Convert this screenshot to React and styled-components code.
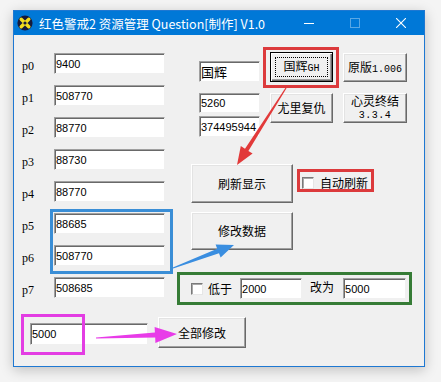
import React from 'react';
import styled, { createGlobalStyle, css } from 'styled-components';

const Global = createGlobalStyle`
  html, body { margin: 0; padding: 0; background: #f4f4f4; }
  body { width: 441px; height: 382px; overflow: hidden; }
  * { box-sizing: border-box; }
`;

const CJK = '"Noto Sans CJK SC", sans-serif';

const Page = styled.div`
  position: relative;
  width: 441px;
  height: 382px;
  padding: 10px 0 0 13px;
`;

const Window = styled.div`
  width: 412px;
  height: 357px;
  border: 1px solid #1e78d2;
  background: #f0f0f0;
  box-shadow: 0 3px 12px rgba(0, 0, 0, 0.22);
  display: flex;
  flex-direction: column;
`;

const TitleBar = styled.div`
  flex: none;
  height: 24px;
  background: #0078d7;
  display: flex;
  align-items: center;
  color: #fff;
  padding-left: 3px;
`;

const TitleText = styled.span`
  margin-left: 6px;
  font: 12.5px ${CJK};
  white-space: nowrap;
  flex: 1;
`;

const CaptionButton = styled.div`
  width: 46px;
  height: 24px;
  display: flex;
  align-items: center;
  justify-content: center;
`;

const Client = styled.div`
  flex: 1;
  padding: 17px 0 0 8px;
  display: flex;
  flex-direction: column;
`;

const MainRow = styled.div`
  display: flex;
  align-items: flex-start;
`;

const LeftCol = styled.div`
  margin-top: 1px;
  display: grid;
  grid-template-columns: 32px 111px;
  grid-auto-rows: 21px;
  row-gap: 11px;
`;

const PLabel = styled.span`
  font: 12px "Liberation Serif", serif;
  line-height: 21px;
  margin-top: 3px;
  color: #000;
`;

const Field = styled.input`
  width: ${(p) => p.$w || 111}px;
  height: ${(p) => p.$h || 21}px;
  margin: 0;
  padding: 0 1px;
  background: #fff;
  border: 1px solid;
  border-color: #a0a0a0 #f0f0f0 #f0f0f0 #a0a0a0;
  box-shadow: inset 1px 1px #696969;
  font: ${(p) => p.$fs || 11}px "Liberation Sans", ${CJK};
  color: #000;
  outline: none;
`;

const RightArea = styled.div`
  margin-left: 12px;
  width: 235px;
  display: flex;
  flex-direction: column;
`;

const TopGrid = styled.div`
  margin-left: 22px;
  display: grid;
  grid-template-columns: 61px 63px 64px;
  grid-template-rows: 30px 44px;
  column-gap: 10px;
  row-gap: 11px;
`;

const FieldStack = styled.div`
  display: flex;
  flex-direction: column;
  gap: 3px;
`;

const Button = styled.button`
  width: ${(p) => p.$w}px;
  height: ${(p) => p.$h}px;
  align-self: ${(p) => p.$align || 'start'};
  margin: 0;
  padding: 0;
  background: #f0f0f0;
  border: 1px solid;
  border-color: #fff #696969 #696969 #fff;
  box-shadow: inset -1px -1px #a0a0a0, inset 1px 1px #e3e3e3;
  font: 12px ${CJK};
  line-height: 12px;
  color: #000;
  position: relative;
  ${(p) =>
    p.$default &&
    css`
      border-color: #000;
      box-shadow: inset 1px 1px #fff, inset -1px -1px #696969, inset -2px -2px #a0a0a0;
      &::after {
        content: '';
        position: absolute;
        inset: 4px;
        border: 1px dotted #000;
      }
    `}
`;

const Mono = styled.span`
  font: 10px "Liberation Mono", monospace;
  letter-spacing: ${(p) => p.$ls || 0}px;
`;

const RefreshRow = styled.div`
  margin: 27px 0 0 14px;
  display: flex;
  align-items: flex-start;
`;

const CheckLabel = styled.label`
  display: flex;
  align-items: center;
  gap: ${(p) => p.$gap || 6}px;
  margin: ${(p) => p.$m || '0'};
  font: 12px ${CJK};
  color: #000;
  white-space: nowrap;
`;

const CheckBox = styled.span`
  width: 12px;
  height: 12px;
  background: #fff;
  border: 1px solid;
  border-color: #7a7a7a #e6e6e6 #e6e6e6 #7a7a7a;
  box-shadow: inset 1px 1px #a8a8a8;
  flex: none;
`;

const ModifyWrap = styled.div`
  margin: 9px 0 0 14px;
`;

const LowRow = styled.div`
  margin-top: 22px;
  height: 33px;
  padding-left: 14px;
  display: flex;
  align-items: center;
`;

const Caption = styled.span`
  font: 12px ${CJK};
  color: #000;
  margin: ${(p) => p.$m || '0'};
  white-space: nowrap;
`;

const BottomRow = styled.div`
  margin: 12px 0 0 8px;
  display: flex;
  align-items: flex-start;
  gap: 10px;
`;

const FieldSlot = styled.div`
  margin-top: 6px;
`;

const Overlay = styled.svg`
  position: absolute;
  left: 0;
  top: 0;
  pointer-events: none;
`;

function arrowPoints(x0, y0, x1, y1, w0, w1, L, H) {
  const dx = x1 - x0;
  const dy = y1 - y0;
  const len = Math.hypot(dx, dy);
  const ux = dx / len;
  const uy = dy / len;
  const px = -uy;
  const py = ux;
  const bx = x1 - ux * L;
  const by = y1 - uy * L;
  const pts = [
    [x0 + (px * w0) / 2, y0 + (py * w0) / 2],
    [bx + (px * w1) / 2, by + (py * w1) / 2],
    [bx + px * H, by + py * H],
    [x1, y1],
    [bx - px * H, by - py * H],
    [bx - (px * w1) / 2, by - (py * w1) / 2],
    [x0 - (px * w0) / 2, y0 - (py * w0) / 2],
  ];
  return pts.map((p) => p.map((v) => v.toFixed(1)).join(',')).join(' ');
}

const AppIcon = () => (
  <svg width="16" height="16" viewBox="0 0 16 16">
    <circle cx="8" cy="8" r="7.6" fill="#151a3c" />
    <path d="M4.2 4.2 L11.8 11.8 M11.8 4.2 L4.2 11.8" stroke="#f2dc1e" strokeWidth="3.4" strokeLinecap="round" />
    <circle cx="8" cy="8" r="1.6" fill="#151a3c" />
  </svg>
);

const rows = [
  ['p0', '9400'],
  ['p1', '508770'],
  ['p2', '88770'],
  ['p3', '88730'],
  ['p4', '88770'],
  ['p5', '88685'],
  ['p6', '508770'],
  ['p7', '508685'],
];

export default function App() {
  return (
    <Page>
      <Global />
      <Window>
        <TitleBar>
          <AppIcon />
          <TitleText>红色警戒2 资源管理 Question[制作] V1.0</TitleText>
          <CaptionButton>
            <svg width="10" height="10" viewBox="0 0 10 10">
              <path d="M0 5.5 H10" stroke="#fff" strokeWidth="1" />
            </svg>
          </CaptionButton>
          <CaptionButton>
            <svg width="10" height="10" viewBox="0 0 10 10">
              <rect x="0.5" y="0.5" width="9" height="9" fill="none" stroke="rgba(255,255,255,0.35)" strokeWidth="1" />
            </svg>
          </CaptionButton>
          <CaptionButton>
            <svg width="10" height="10" viewBox="0 0 10 10">
              <path d="M0 0 L10 10 M10 0 L0 10" stroke="#fff" strokeWidth="1.1" />
            </svg>
          </CaptionButton>
        </TitleBar>
        <Client>
          <MainRow>
            <LeftCol>
              {rows.map(([l, v]) => (
                <React.Fragment key={l}>
                  <PLabel>{l}</PLabel>
                  <Field readOnly defaultValue={v} />
                </React.Fragment>
              ))}
            </LeftCol>
            <RightArea>
              <TopGrid>
                <Field readOnly defaultValue="国辉" $w={61} $fs={13} style={{ alignSelf: 'end' }} />
                <Button $w={63} $h={30} $default>
                  国辉<Mono>GH</Mono>
                </Button>
                <Button $w={64} $h={29} $align="end">
                  原版<Mono>1.006</Mono>
                </Button>
                <FieldStack>
                  <Field readOnly defaultValue="5260" $w={61} $h={20} />
                  <Field readOnly defaultValue="374495944" $w={61} />
                </FieldStack>
                <Button $w={63} $h={30}>
                  尤里复仇
                </Button>
                <Button $w={64} $h={30}>
                  心灵终结
                  <br />
                  <Mono $ls={0.5}>3.3.4</Mono>
                </Button>
              </TopGrid>
              <RefreshRow>
                <Button $w={102} $h={39}>
                  刷新显示
                </Button>
                <CheckLabel $m="10px 0 0 9px">
                  <CheckBox />
                  自动刷新
                </CheckLabel>
              </RefreshRow>
              <ModifyWrap>
                <Button $w={102} $h={38}>
                  修改数据
                </Button>
              </ModifyWrap>
              <LowRow>
                <CheckLabel $gap={5}>
                  <CheckBox />
                  低于
                </CheckLabel>
                <Field readOnly defaultValue="2000" $w={62} style={{ marginLeft: 8 }} />
                <Caption $m="-4px 0 0 8px">改为</Caption>
                <Field readOnly defaultValue="5000" $w={63} style={{ marginLeft: 9 }} />
              </LowRow>
            </RightArea>
          </MainRow>
          <BottomRow>
            <FieldSlot>
              <Field readOnly defaultValue="5000" $w={118} $h={22} />
            </FieldSlot>
            <Button $w={88} $h={31}>
              全部修改
            </Button>
          </BottomRow>
        </Client>
      </Window>
      <Overlay width="441" height="382" viewBox="0 0 441 382">
        <rect x="264.5" y="48.5" width="73" height="38" fill="none" stroke="#dc3a3c" strokeWidth="3" />
        <rect x="298.5" y="170.5" width="74" height="20" fill="none" stroke="#dc3a3c" strokeWidth="3" />
        <rect x="51.5" y="210.5" width="120" height="62" fill="none" stroke="#3a8ed6" strokeWidth="3" />
        <rect x="178.5" y="273.5" width="232" height="30" fill="none" stroke="#367c36" strokeWidth="3" />
        <rect x="22.5" y="315.5" width="61" height="38" fill="none" stroke="#e33de3" strokeWidth="3" />
        <polygon points={arrowPoints(286, 88, 237, 165, 1.2, 4, 18, 7)} fill="#e23a3a" />
        <polygon points={arrowPoints(173, 268, 234, 245, 1.2, 5, 17, 7)} fill="#3a8ee0" />
        <polygon points={arrowPoints(96, 338, 177, 334, 1.2, 5, 22, 8)} fill="#e83be8" />
      </Overlay>
    </Page>
  );
}
